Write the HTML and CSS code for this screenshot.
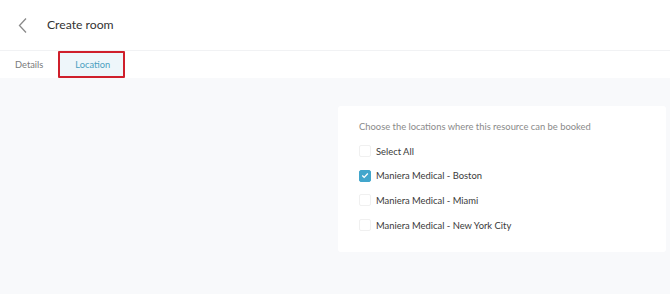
FILE: index.html
```html
<!DOCTYPE html>
<html lang="en">
<head>
    <meta charset="UTF-8">
    <meta name="viewport" content="width=device-width, initial-scale=1.0">
    <title>Create room</title>
    <link rel="stylesheet" href="styles.css">
</head>
<body>

<div class="page-header">
    <a class="back-btn" href="#">
        <svg width="12" height="18" viewBox="0 0 12 18"><path d="M10 2.5 L3.5 9.5 L10 16.5" fill="none" stroke="#8a8a8a" stroke-width="1.3"/></svg>
    </a>
    <h3 class="page-title">Create room</h3>
</div>

<div class="tabs">
    <a class="tab" href="#">Details</a>
    <a class="tab active" href="#">Location</a>
</div>

<div class="content">
    <div class="card">
        <p class="card-hint">Choose the locations where this resource can be booked</p>
        <ul class="check-list">
            <li class="check-item"><span class="box"></span>Select All</li>
            <li class="check-item">
                <span class="box checked">
                    <svg width="11" height="11" viewBox="0 0 11 11"><path d="M2.5 5.6 L4.6 7.6 L8.6 3.4" fill="none" stroke="#fff" stroke-width="1.5"/></svg>
                </span>Maniera Medical - Boston
            </li>
            <li class="check-item"><span class="box"></span>Maniera Medical - Miami</li>
            <li class="check-item"><span class="box"></span>Maniera Medical - New York City</li>
        </ul>
    </div>
</div>

</body>
</html>
```

FILE: styles.css
```css
/* Dasar halaman */
body {
    margin: 0;
    font-family: Lato, "Open Sans", sans-serif;
    background-color: #f8f9fb;
    color: #444;
}

/* Header */
.page-header {
    display: flex;
    align-items: center;
    height: 50px;
    padding-left: 16px;
    background-color: #fff;
    border-bottom: 1px solid #f1f2f4;
}

.back-btn {
    display: flex;
    width: 31px;
}

.page-title {
    margin: 0 0 2px 0;
    font-size: 12.2px;
    font-weight: normal;
    color: #333;
}

/* Tab */
.tabs {
    display: flex;
    align-items: stretch;
    height: 27px;
    padding-left: 15px;
    background-color: #fff;
}

.tab {
    display: flex;
    align-items: center;
    font-size: 9.3px;
    color: #7a7a7a;
    text-decoration: none;
}

.tab.active {
    margin-left: 15px;
    padding: 0 13px 0 15px;
    background-color: #eef6fa;
    color: #4a9fc0;
    border: 2px solid #cf1f2b;
    border-radius: 1px;
}

/* Konten */
.content {
    display: flex;
    justify-content: flex-end;
    padding: 28px 4px 0 0;
}

.card {
    width: 307px;
    height: 126px;
    padding: 15px 0 5px 21px;
    background-color: #fff;
    border-radius: 3px;
}

.card-hint {
    margin: 0 0 7px 0;
    font-size: 9.4px;
    color: #8a8a8a;
}

.check-list {
    margin: 0;
    padding: 0;
    list-style: none;
}

.check-item {
    display: flex;
    align-items: center;
    height: 24.6px;
    font-size: 9.4px;
    color: #3a3a3a;
}

.box {
    display: flex;
    align-items: center;
    justify-content: center;
    width: 10px;
    height: 10px;
    margin-right: 5px;
    border: 1px solid #f0f0f0;
    border-radius: 2px;
}

.box.checked {
    background-color: #42a6cc;
    border-color: #42a6cc;
}
```
